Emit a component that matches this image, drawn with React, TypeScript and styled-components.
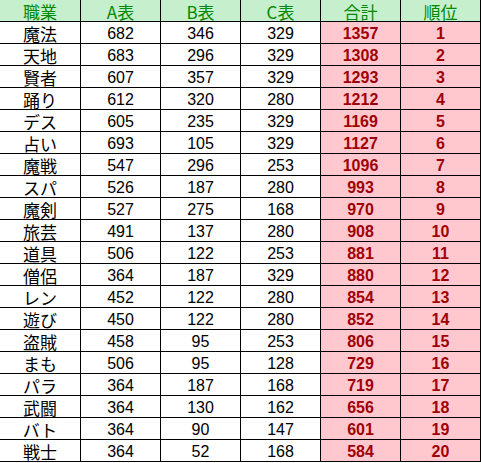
import React from "react";
import styled, { createGlobalStyle, css } from "styled-components";

const Global = createGlobalStyle`
  html, body { margin: 0; padding: 0; background: #ffffff; }
`;

type Kind = "head" | "plain" | "hit";

const rows: [string, number, number, number, number, number][] = [
  ["魔法", 682, 346, 329, 1357, 1],
  ["天地", 683, 296, 329, 1308, 2],
  ["賢者", 607, 357, 329, 1293, 3],
  ["踊り", 612, 320, 280, 1212, 4],
  ["デス", 605, 235, 329, 1169, 5],
  ["占い", 693, 105, 329, 1127, 6],
  ["魔戦", 547, 296, 253, 1096, 7],
  ["スパ", 526, 187, 280, 993, 8],
  ["魔剣", 527, 275, 168, 970, 9],
  ["旅芸", 491, 137, 280, 908, 10],
  ["道具", 506, 122, 253, 881, 11],
  ["僧侶", 364, 187, 329, 880, 12],
  ["レン", 452, 122, 280, 854, 13],
  ["遊び", 450, 122, 280, 852, 14],
  ["盗賊", 458, 95, 253, 806, 15],
  ["まも", 506, 95, 128, 729, 16],
  ["パラ", 364, 187, 168, 719, 17],
  ["武闘", 364, 130, 162, 656, 18],
  ["バト", 364, 90, 147, 601, 19],
  ["戦士", 364, 52, 168, 584, 20],
];

const headers = ["職業", "A表", "B表", "C表", "合計", "順位"];

const Sheet = styled.div`
  display: grid;
  grid-template-columns: 81px repeat(5, 80px);
  grid-auto-rows: 22px;
  width: 481px;
`;

const Cell = styled.div<{ $kind: Kind; $num?: boolean }>`
  box-sizing: border-box;
  border-right: 1px solid #000000;
  border-bottom: 1px solid #000000;
  display: flex;
  align-items: center;
  justify-content: center;
  padding-top: 2px;
  white-space: nowrap;
  font-family: "Noto Sans CJK JP", "Liberation Sans", sans-serif;
  font-size: 17px;
  line-height: 1;
  color: #000000;
  background: #ffffff;
  ${(p) =>
    p.$kind === "head" &&
    css`
      background: #c6efce;
      color: #008a00;
    `}
  ${(p) =>
    p.$num &&
    p.$kind === "plain" &&
    css`
      font-family: "Liberation Sans Narrow", "Liberation Sans", sans-serif;
      font-size: 16px;
    `}
  ${(p) =>
    p.$kind === "hit" &&
    css`
      background: #ffc7ce;
      color: #a00008;
      font-family: "Liberation Sans", sans-serif;
      font-weight: bold;
      font-size: 16px;
    `}
`;

export default function App() {
  return (
    <>
      <Global />
      <Sheet>
        {headers.map((h) => (
          <Cell key={h} $kind="head">
            {h}
          </Cell>
        ))}
        {rows.map((r) => (
          <React.Fragment key={r[0]}>
            <Cell $kind="plain">{r[0]}</Cell>
            <Cell $kind="plain" $num>{r[1]}</Cell>
            <Cell $kind="plain" $num>{r[2]}</Cell>
            <Cell $kind="plain" $num>{r[3]}</Cell>
            <Cell $kind="hit">{r[4]}</Cell>
            <Cell $kind="hit">{r[5]}</Cell>
          </React.Fragment>
        ))}
      </Sheet>
    </>
  );
}
